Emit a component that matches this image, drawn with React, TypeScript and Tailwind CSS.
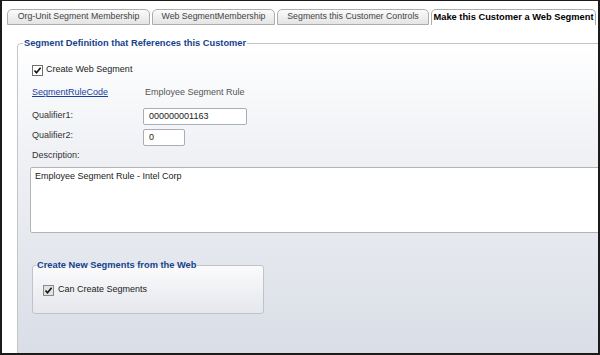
import React from "react";

const tabs = [
  { label: "Org-Unit Segment Membership", w: "w-[143px]" },
  { label: "Web SegmentMembership", w: "w-[123px]" },
  { label: "Segments this Customer Controls", w: "w-[152px]" },
];

function Check({ muted }: { muted?: boolean }) {
  return (
    <span
      className={
        "flex h-[11px] w-[11px] shrink-0 items-center justify-center border " +
        (muted ? "border-[#8a8a8a] bg-[#e2e2e2]" : "border-[#6f6f6f] bg-white")
      }
    >
      <svg width="9" height="9" viewBox="0 0 9 9">
        <path d="M1.5 4.5 L3.5 6.8 L7.6 1.8" fill="none" stroke="#111" strokeWidth="1.6" />
      </svg>
    </span>
  );
}

export default function App() {
  return (
    <div className="h-[355px] w-[600px] overflow-hidden border-2 border-t border-[#1b1b1b] bg-white font-['Liberation_Sans',Arial,sans-serif] text-[9px] text-[#222]">
      <div className="flex gap-[2px] pl-[5px] pt-[8px]">
        {tabs.map((t) => (
          <div
            key={t.label}
            className={`${t.w} flex h-[16px] items-center justify-center rounded-t-[5px] border border-[#adadad] bg-linear-to-b from-[#fbfbfb] to-[#e4e4e4] text-[8.8px] text-[#444]`}
          >
            {t.label}
          </div>
        ))}
        <div className="flex h-[16px] w-[165px] items-center justify-center rounded-t-[5px] border border-b-0 border-[#adadad] bg-white text-[9.3px] font-bold text-black">
          Make this Customer a Web Segment
        </div>
      </div>

      <div className="pl-[15px] pt-[12px]">
        <fieldset className="h-[330px] w-[620px] rounded-tl-[4px] border border-[#c4c4c4] bg-[linear-gradient(to_bottom,#ffffff_0%,#eff1f5_34%,#e4e7ed_66%,#d8dce5_100%)] pl-[5px]">
          <legend className="px-[1px] text-[9.3px] leading-[12px] font-bold text-[#15428b]">
            Segment Definition that References this Customer
          </legend>
          <div className="pl-[9px] pt-[15px]">
            <div className="flex h-[12px] items-center gap-[3px]">
              <Check />
              <span>Create Web Segment</span>
            </div>

            <div className="mt-[11px] flex h-[12px] items-center">
              <span className="w-[113px] text-[#1a3fa0] underline">SegmentRuleCode</span>
              <span className="text-[#555]">Employee Segment Rule</span>
            </div>

            <div className="mt-[9px] flex items-start">
              <span className="w-[111px] pt-[1px] leading-[12px] text-[#333]">Qualifier1:</span>
              <div className="flex h-[17px] w-[104px] items-center rounded-[2px] border border-[#a7aeb8] bg-white pl-[5px]">
                000000001163
              </div>
            </div>

            <div className="mt-[4px] flex items-start">
              <span className="w-[111px] leading-[12px] text-[#333]">Qualifier2:</span>
              <div className="flex h-[17px] w-[42px] items-center rounded-[2px] border border-[#a7aeb8] bg-white pl-[5px]">
                0
              </div>
            </div>

            <div className="mt-[3px] leading-[12px] text-[#333]">Description:</div>

            <div className="-ml-[2px] mt-[6px] h-[66px] w-[600px] rounded-[2px] border border-[#b4b4b4] bg-white pl-[4px] pt-[2px] leading-[12px]">
              Employee Segment Rule - Intel Corp
            </div>

            <fieldset className="mt-[26px] h-[55px] w-[232px] rounded-[3px] border border-[#bfc3cb] bg-linear-to-b from-[#fbfbfc] to-[#e5e7ed] pl-[3px]">
              <legend className="px-[1px] text-[9.3px] leading-[12px] font-bold text-[#15428b]">
                Create New Segments from the Web
              </legend>
              <div className="mt-[13px] flex h-[12px] items-center gap-[4px] pl-[7px]">
                <Check muted />
                <span>Can Create Segments</span>
              </div>
            </fieldset>
          </div>
        </fieldset>
      </div>
    </div>
  );
}
